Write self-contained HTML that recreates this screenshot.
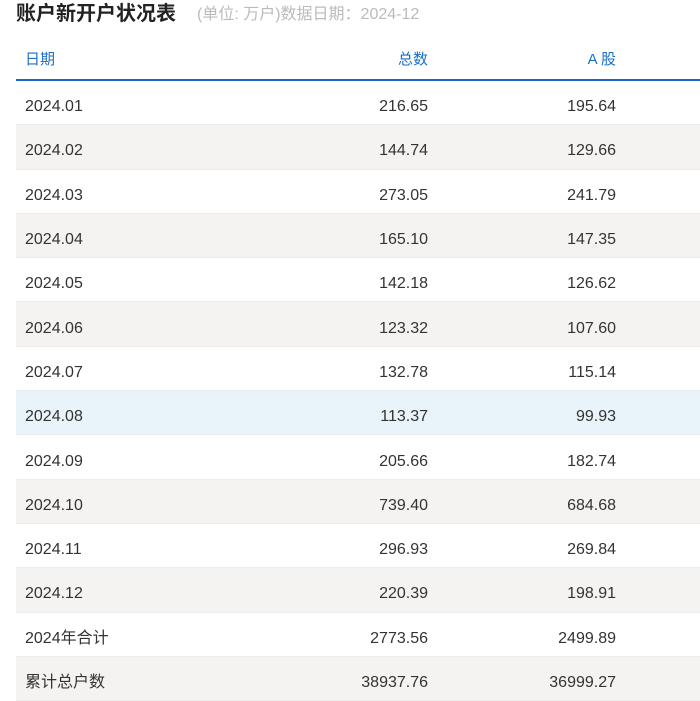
<!DOCTYPE html>
<html><head><meta charset="utf-8"><style>
body{margin:0;background:#fff;width:700px;height:698px;overflow:hidden;font-family:"Liberation Sans","Noto Sans CJK SC",sans-serif;}
.t{position:absolute;left:16px;top:1px;font-size:20px;font-weight:bold;color:#222;line-height:26px;}
.s{position:absolute;left:197px;top:3px;font-size:16px;color:#bbb;line-height:24px;}
table{position:absolute;left:16px;top:41px;width:700px;border-collapse:collapse;}
th{color:#1a6fc9;font-weight:normal;font-size:15px;height:38px;border-bottom:2px solid #1f64c9;padding:0;line-height:20px;}
td{font-size:16px;color:#333;height:34.3px;padding:9px 0 0 0;border-bottom:1px solid #ececec;line-height:20px;vertical-align:middle;}
tr.g td{background:#f4f3f2;}
tr.h td{background:#e9f3fa;}
.c1{text-align:left;padding-left:9px;width:200px;}
.c2{text-align:right;width:203px;}
.c3{text-align:right;width:188px;}
</style></head><body>
<div class="t">账户新开户状况表</div>
<div class="s">(单位: 万户)数据日期：2024-12</div>
<table>
<tr><th class="c1">日期</th><th class="c2">总数</th><th class="c3">A 股</th><th></th></tr>
<tr><td class="c1">2024.01</td><td class="c2">216.65</td><td class="c3">195.64</td><td></td></tr>
<tr class="g"><td class="c1">2024.02</td><td class="c2">144.74</td><td class="c3">129.66</td><td></td></tr>
<tr><td class="c1">2024.03</td><td class="c2">273.05</td><td class="c3">241.79</td><td></td></tr>
<tr class="g"><td class="c1">2024.04</td><td class="c2">165.10</td><td class="c3">147.35</td><td></td></tr>
<tr><td class="c1">2024.05</td><td class="c2">142.18</td><td class="c3">126.62</td><td></td></tr>
<tr class="g"><td class="c1">2024.06</td><td class="c2">123.32</td><td class="c3">107.60</td><td></td></tr>
<tr><td class="c1">2024.07</td><td class="c2">132.78</td><td class="c3">115.14</td><td></td></tr>
<tr class="h"><td class="c1">2024.08</td><td class="c2">113.37</td><td class="c3">99.93</td><td></td></tr>
<tr><td class="c1">2024.09</td><td class="c2">205.66</td><td class="c3">182.74</td><td></td></tr>
<tr class="g"><td class="c1">2024.10</td><td class="c2">739.40</td><td class="c3">684.68</td><td></td></tr>
<tr><td class="c1">2024.11</td><td class="c2">296.93</td><td class="c3">269.84</td><td></td></tr>
<tr class="g"><td class="c1">2024.12</td><td class="c2">220.39</td><td class="c3">198.91</td><td></td></tr>
<tr><td class="c1">2024年合计</td><td class="c2">2773.56</td><td class="c3">2499.89</td><td></td></tr>
<tr class="g"><td class="c1">累计总户数</td><td class="c2">38937.76</td><td class="c3">36999.27</td><td></td></tr>
</table>
</body></html>
